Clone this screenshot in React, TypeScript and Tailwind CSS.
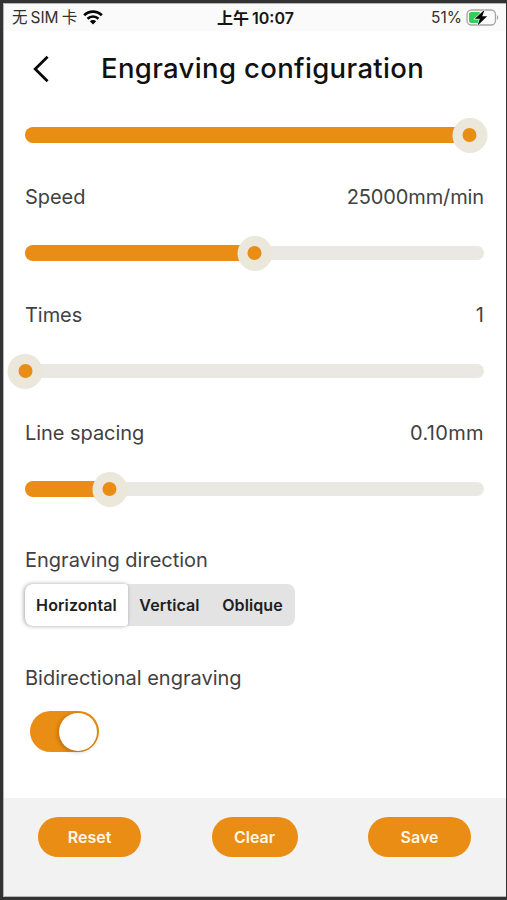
import { useState } from 'react';

const directions = [
  { name: 'Horizontal', width: 'w-[103px]' },
  { name: 'Vertical', width: 'w-[83px]' },
  { name: 'Oblique', width: 'w-[83px]' },
];

// position is the thumb centre in px from the start of the 459px track
function Slider({ position }: { position: number }) {
  return (
    <div className="relative flex h-9 items-center">
      <div className="h-[14px] w-full rounded-full bg-[#eae8e2]" />
      {position > 0 && (
        <div
          className="absolute left-0 top-[10px] h-4 rounded-l-full bg-[#e98d14]"
          style={{ width: position }}
        />
      )}
      <div
        className="absolute top-[0.5px] flex h-[35px] w-[35px] -translate-x-1/2 items-center justify-center rounded-full bg-[#ebe7da]"
        style={{ left: position }}
      >
        <div className="h-[14px] w-[14px] rounded-full bg-[#e98d14]" />
      </div>
    </div>
  );
}

type SettingProps = {
  label: string;
  value: string;
  position: number;
  valueClass?: string;
};

function Setting({ label, value, position, valueClass = '' }: SettingProps) {
  return (
    <>
      <div className="mt-8 mb-[26px] flex h-6 items-center justify-between text-[20px] text-[#414141]">
        <span className="tracking-[-0.05px]">{label}</span>
        <span className={valueClass}>{value}</span>
      </div>
      <Slider position={position} />
    </>
  );
}

function StatusBar() {
  return (
    <div className="grid h-[27px] grid-cols-3 items-center bg-[#fafafa] pl-2 pr-[7px] text-[15.5px] text-[#303030]">
      <div className="flex items-center gap-[6px]">
        <span className="flex gap-[3px] whitespace-nowrap">
          <span>无</span>
          <span>SIM</span>
          <span>卡</span>
        </span>
        <svg className="h-[15px] w-5" viewBox="0 0 20 15" fill="none" stroke="#050505">
          <path d="M1.2 5.3C6.2.5 13.8.5 18.8 5.3" strokeWidth="2.8" />
          <path d="M4.5 8.7C7.7 5.8 12.3 5.8 15.5 8.7" strokeWidth="2.6" />
          <path d="M10 14.6 6.8 11.2C8.5 9.7 11.5 9.7 13.2 11.2Z" fill="#050505" stroke="none" />
        </svg>
      </div>
      <div className="flex justify-center gap-[3px] whitespace-nowrap text-[16px] font-semibold text-[#151515]">
        <span>上午</span>
        <span>10:07</span>
      </div>
      <div className="flex items-center justify-end gap-1">
        <span>51%</span>
        <svg className="h-[17px] w-[33px]" viewBox="0 0 33 17" fill="none">
          <rect x="1" y="1" width="28.5" height="15" rx="4.5" stroke="#a5a5a5" strokeWidth="1.3" />
          <rect x="3" y="3" width="12" height="11" rx="2.5" fill="#35cc5c" />
          <path d="M31 6.2C32.7 6.8 32.7 10.2 31 10.8Z" fill="#aaa" />
          <path
            d="M18.6.8 8.8 9.8h5L11.6 16.4 21.2 7.2h-5Z"
            fill="#050505"
            stroke="#fafafa"
            strokeWidth="1.2"
            style={{ paintOrder: 'stroke' }}
          />
        </svg>
      </div>
    </div>
  );
}

export default function App() {
  const [direction, setDirection] = useState('Horizontal');
  const [bidirectional, setBidirectional] = useState(true);

  return (
    <div className="flex h-[900px] w-[507px] flex-col border-t-[3px] border-r border-b-[3px] border-l-[3px] border-[#333] bg-white font-['Inter','Noto_Sans_CJK_SC',sans-serif]">
      <div className="flex flex-1 flex-col border-l border-t border-b border-[#b5b5b5]">
        <StatusBar />

        {/* Header */}
        <header className="flex h-[76px] items-center">
          <button aria-label="Back" className="ml-[28px] mr-[51px]">
            <svg className="h-[28px] w-[17px]" viewBox="0 0 17 28" fill="none" stroke="#090909" strokeWidth="2.8">
              <path d="M15.6 1.8 3.2 14 15.6 26.2" />
            </svg>
          </button>
          <h1 className="whitespace-nowrap pl-px text-[27.5px] font-medium tracking-[0.35px] text-[#111]">
            Engraving configuration
          </h1>
        </header>

        {/* Settings */}
        <main className="mt-[10px] ml-[21px] w-[459px]">
          <Slider position={444.5} />
          <Setting label="Speed" value="25000mm/min" position={229.5} valueClass="tracking-[-0.12px]" />
          <Setting label="Times" value="1" position={0} />
          <Setting label="Line spacing" value="0.10mm" position={84.5} valueClass="tracking-[0.35px]" />

          <h2 className="mt-[41px] h-6 text-[20px] leading-6 text-[#414141]">Engraving direction</h2>
          <div className="mt-3 flex h-[42px] w-[270px] rounded-[8px] bg-[#e3e3e3]">
            {directions.map((item) => (
              <button
                key={item.name}
                onClick={() => setDirection(item.name)}
                className={`${item.width} text-[16px] font-semibold tracking-[0.1px] text-[#202020] ${
                  direction === item.name ? 'rounded-l-[8px] rounded-r-[3px] bg-white shadow-[-1px_0_4px_rgba(0,0,0,0.35)]' : ''
                }`}
              >
                {item.name}
              </button>
            ))}
          </div>

          <h2 className="mt-10 h-6 text-[20px] leading-6 text-[#414141]">Bidirectional engraving</h2>
          <button
            role="switch"
            aria-checked={bidirectional}
            aria-label="Bidirectional engraving"
            onClick={() => setBidirectional(!bidirectional)}
            className={`mt-[21px] ml-[5px] flex h-[41px] w-[69px] items-center rounded-full px-[2px] ${
              bidirectional ? 'justify-end bg-[#e98d14]' : 'justify-start bg-[#e3e3e3]'
            }`}
          >
            <span className="h-[38px] w-[38px] rounded-full bg-white shadow-[-1px_1px_4px_rgba(0,0,0,0.25)]" />
          </button>
        </main>

        {/* Actions */}
        <footer className="mt-auto flex h-[98px] justify-between bg-[#f2f2f2] pt-[19px] pr-[35px] pl-[34px] text-[16px] font-semibold text-[#fff8e8]">
          <button className="h-10 w-[103px] rounded-full bg-[#e98d14]">Reset</button>
          <button className="h-10 w-[86px] rounded-full bg-[#e98d14]">Clear</button>
          <button className="h-10 w-[103px] rounded-full bg-[#e98d14]">Save</button>
        </footer>
      </div>
    </div>
  );
}
